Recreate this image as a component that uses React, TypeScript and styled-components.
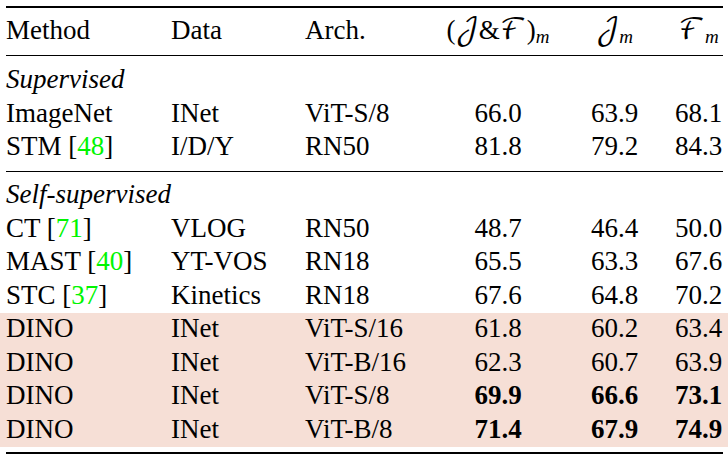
import React from "react";
import styled, { createGlobalStyle } from "styled-components";

const Global = createGlobalStyle`
  html, body { margin: 0; padding: 0; background: #ffffff; }
  body { font-family: "Liberation Serif", "Times New Roman", serif; color: #000; }
`;

const Page = styled.div`
  width: 728px;
  height: 461px;
  overflow: hidden;
  box-sizing: border-box;
  padding: 6px 5px 0 6px;
`;

const Rule = styled.div<{ $thick?: boolean; $gap: number }>`
  height: ${(p) => (p.$thick ? 2 : 1)}px;
  background: #000;
  margin-top: ${(p) => p.$gap}px;
`;

const Row = styled.div<{ $gap?: number }>`
  display: grid;
  grid-template-columns: 165px 134px 136px 114px 119px 49px;
  height: 33.5px;
  box-sizing: border-box;
  padding-bottom: 3.5px;
  line-height: 30px;
  font-size: 27px;
  margin-top: ${(p) => p.$gap ?? 0}px;
`;

const Cell = styled.div<{ $center?: boolean; $bold?: boolean }>`
  white-space: nowrap;
  text-align: ${(p) => (p.$center ? "center" : "left")};
  font-weight: ${(p) => (p.$bold ? 700 : 400)};
`;

const SectionLabel = styled.div`
  grid-column: 1 / -1;
  font-style: italic;
  white-space: nowrap;
`;

const Cite = styled.span`
  color: #00f500;
`;

const Highlight = styled.div`
  background: #f6dfd6;
  margin: 0 -5px 0 -6px;
  padding: 0 5px 0 6px;
`;

const Cal = styled.span`
  font-family: "DejaVu Math TeX Gyre", "DejaVu Serif", "Liberation Serif", serif;
  font-style: normal;
  font-size: 29px;
  line-height: 0;
`;

const Sub = styled.span`
  font-style: italic;
  font-size: 19px;
  position: relative;
  top: 4px;
  line-height: 0;
`;

type R = { m: string; cite?: string; d: string; a: string; v: [string, string, string]; bold?: boolean };

const supervised: R[] = [
  { m: "ImageNet", d: "INet", a: "ViT-S/8", v: ["66.0", "63.9", "68.1"] },
  { m: "STM", cite: "48", d: "I/D/Y", a: "RN50", v: ["81.8", "79.2", "84.3"] },
];

const selfSup: R[] = [
  { m: "CT", cite: "71", d: "VLOG", a: "RN50", v: ["48.7", "46.4", "50.0"] },
  { m: "MAST", cite: "40", d: "YT-VOS", a: "RN18", v: ["65.5", "63.3", "67.6"] },
  { m: "STC", cite: "37", d: "Kinetics", a: "RN18", v: ["67.6", "64.8", "70.2"] },
];

const dino: R[] = [
  { m: "DINO", d: "INet", a: "ViT-S/16", v: ["61.8", "60.2", "63.4"] },
  { m: "DINO", d: "INet", a: "ViT-B/16", v: ["62.3", "60.7", "63.9"] },
  { m: "DINO", d: "INet", a: "ViT-S/8", v: ["69.9", "66.6", "73.1"], bold: true },
  { m: "DINO", d: "INet", a: "ViT-B/8", v: ["71.4", "67.9", "74.9"], bold: true },
];

const DataRow = ({ r }: { r: R }) => (
  <Row>
    <Cell>
      {r.m}
      {r.cite && (
        <>
          {" "}[<Cite>{r.cite}</Cite>]
        </>
      )}
    </Cell>
    <Cell>{r.d}</Cell>
    <Cell>{r.a}</Cell>
    {r.v.map((x, i) => (
      <Cell key={i} $center $bold={r.bold}>
        {x}
      </Cell>
    ))}
  </Row>
);

export default function App() {
  return (
    <>
      <Global />
      <Page>
        <Rule $thick $gap={0} />
        <Row $gap={7}>
          <Cell>Method</Cell>
          <Cell>Data</Cell>
          <Cell>Arch.</Cell>
          <Cell $center>
            (<Cal>𝒥</Cal>&amp;<Cal>ℱ</Cal>)<Sub>m</Sub>
          </Cell>
          <Cell $center>
            <Cal>𝒥</Cal>
            <Sub>m</Sub>
          </Cell>
          <Cell $center>
            <Cal>ℱ</Cal>
            <Sub>m</Sub>
          </Cell>
        </Row>
        <Rule $gap={6.5} />
        <Row $gap={8}>
          <SectionLabel>Supervised</SectionLabel>
        </Row>
        {supervised.map((r, i) => (
          <DataRow key={i} r={r} />
        ))}
        <Rule $gap={6} />
        <Row $gap={7.5}>
          <SectionLabel>Self-supervised</SectionLabel>
        </Row>
        {selfSup.map((r, i) => (
          <DataRow key={i} r={r} />
        ))}
        <Highlight>
          {dino.map((r, i) => (
            <DataRow key={i} r={r} />
          ))}
        </Highlight>
        <Rule $thick $gap={4.5} />
      </Page>
    </>
  );
}
